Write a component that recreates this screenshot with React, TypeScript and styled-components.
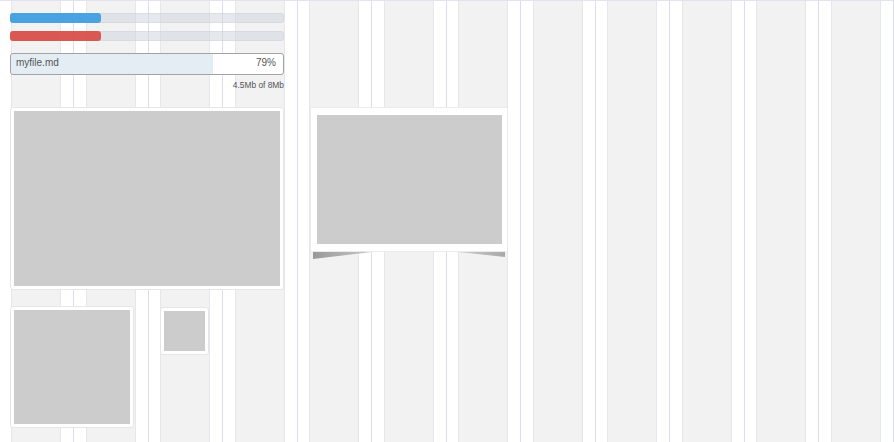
import styled, { createGlobalStyle } from "styled-components";

const GlobalStyle = createGlobalStyle`
  html, body {
    margin: 0;
    padding: 0;
    background: #ffffff;
    font-family: "Liberation Sans", Arial, Helvetica, sans-serif;
    color: #555555;
  }
  * {
    box-sizing: border-box;
  }
`;

const Page = styled.div`
  display: grid;
  width: 100%;
  height: 100vh;
  overflow: hidden;
  & > * {
    grid-area: 1 / 1;
  }
`;

const GridOverlay = styled.div`
  display: flex;
  width: calc(100% + 1.6px);
  margin-left: -1.6px;
  border-top: 1px solid #e2e2f0;
  border-right: 1px solid #dcdcf0;
`;

const GridColumn = styled.div`
  flex: 1;
  display: flex;
  border-left: 1px solid #dcdcf0;
  padding: 0 12px 0 11.6px;
`;

const GridCell = styled.div`
  flex: 1;
  background: #f2f2f2;
  border-left: 1px solid #e6e6ee;
  border-right: 1px solid #e6e6ee;
`;

const Content = styled.div`
  display: flex;
  align-items: flex-start;
  gap: 26px;
  padding: 13px 0 0 10px;
`;

const LeftColumn = styled.div`
  width: 274px;
  display: flex;
  flex-direction: column;
`;

const MiddleColumn = styled.div`
  width: 198px;
  margin-top: 94px;
  display: flex;
  flex-direction: column;
`;

const Track = styled.div`
  height: 10px;
  border-radius: 3px;
  background: rgba(208, 214, 221, 0.55);
  border: 1px solid rgba(200, 206, 214, 0.35);
  & + & {
    margin-top: 8px;
  }
`;

const Fill = styled.div<{ $tone: "blue" | "red" }>`
  height: 100%;
  margin: -1px 0 0 -1px;
  height: 10px;
  border-radius: 3px;
  background: ${(p) =>
    p.$tone === "blue" ? "#49a3e1" : "rgba(217, 72, 68, 0.9)"};
`;

const Upload = styled.div<{ $fill: number }>`
  margin-top: 12px;
  height: 22px;
  border: 1px solid #a3a3a3;
  border-radius: 3px;
  background: linear-gradient(
    90deg,
    #e4edf3 ${(p) => p.$fill}%,
    #ffffff ${(p) => p.$fill}%
  );
  display: flex;
  align-items: center;
  justify-content: space-between;
  padding: 0 7px 3px 5px;
  font-size: 10px;
  color: #555555;
`;

const Caption = styled.div`
  margin-top: 5px;
  text-align: right;
  font-size: 8.4px;
  line-height: 10px;
  color: #555555;
`;

const Card = styled.div<{ $w?: number; $h: number; $pad?: number }>`
  width: ${(p) => (p.$w ? `${p.$w}px` : "100%")};
  height: ${(p) => p.$h}px;
  padding: ${(p) => p.$pad ?? 3}px;
  background: #ffffff;
  border: 1px solid #e6e6e6;
  border-radius: 3px;
  display: flex;
`;

const Placeholder = styled.div`
  flex: 1;
  background: #cccccc;
`;

const BigCard = styled(Card)`
  margin-top: 17px;
`;

const CardRow = styled.div`
  display: flex;
  align-items: flex-start;
  gap: 26px;
  margin-top: 16px;
`;

const TinyCard = styled(Card)`
  margin-top: 1px;
`;

const LiftedCard = styled(Card)`
  border-radius: 0;
  border-color: #ebebeb;
  padding: 7px 5px 7px 6px;
`;

const Corners = styled.svg`
  display: block;
  width: 198px;
  height: 8px;
`;

const columns = Array.from({ length: 12 }, (_, i) => i);

export default function App() {
  return (
    <>
      <GlobalStyle />
      <Page>
        <GridOverlay>
          {columns.map((c) => (
            <GridColumn key={c}>
              <GridCell />
            </GridColumn>
          ))}
        </GridOverlay>
        <Content>
          <LeftColumn>
            <Track>
              <Fill $tone="blue" style={{ width: "33.5%" }} />
            </Track>
            <Track>
              <Fill $tone="red" style={{ width: "33.5%" }} />
            </Track>
            <Upload $fill={74.3}>
              <span>myfile.md</span>
              <span>79%</span>
            </Upload>
            <Caption>4.5Mb of 8Mb</Caption>
            <BigCard $h={183}>
              <Placeholder />
            </BigCard>
            <CardRow>
              <Card $w={124} $h={122}>
                <Placeholder />
              </Card>
              <TinyCard $w={49} $h={48}>
                <Placeholder />
              </TinyCard>
            </CardRow>
          </LeftColumn>
          <MiddleColumn>
            <LiftedCard $h={145}>
              <Placeholder />
            </LiftedCard>
            <Corners viewBox="0 0 198 8">
              <defs>
                <linearGradient id="leftLift" x1="0" x2="1" y1="0" y2="0">
                  <stop offset="0" stopColor="#999999" />
                  <stop offset="1" stopColor="#c8c8c8" />
                </linearGradient>
                <linearGradient id="rightLift" x1="0" x2="1" y1="0" y2="0">
                  <stop offset="0" stopColor="#cfcfcf" />
                  <stop offset="1" stopColor="#a8a8a8" />
                </linearGradient>
              </defs>
              <polygon points="3,0 62,0 3,7" fill="url(#leftLift)" />
              <polygon points="148,0 195,0 195,5" fill="url(#rightLift)" />
            </Corners>
          </MiddleColumn>
        </Content>
      </Page>
    </>
  );
}
